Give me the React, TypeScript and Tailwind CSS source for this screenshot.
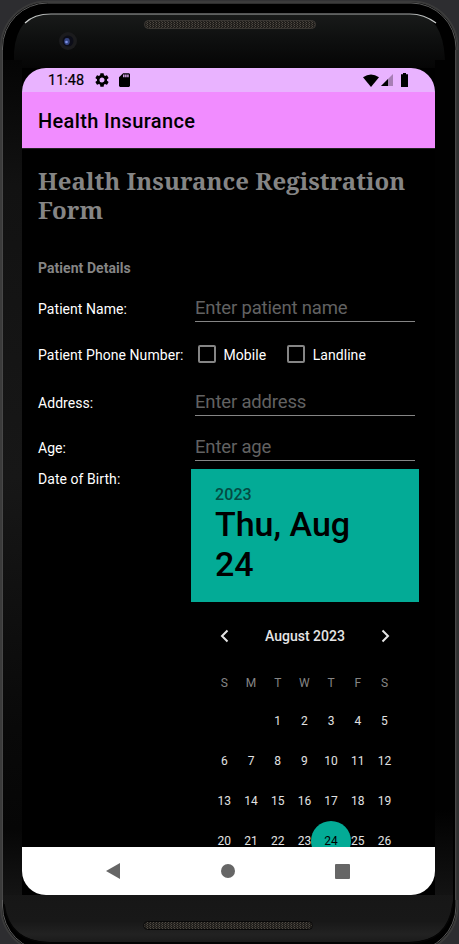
import React from "react";

const WEEKDAYS = ["S", "M", "T", "W", "T", "F", "S"];
const DAYS: (number | null)[] = [null, null, ...Array.from({ length: 26 }, (_, i) => i + 1)];

function DeviceFrame() {
  return (
    <svg className="absolute inset-0" width="459" height="944" viewBox="0 0 459 944" fill="none">
      <defs>
        <linearGradient id="top" x1="0" y1="13" x2="0" y2="68" gradientUnits="userSpaceOnUse">
          <stop stopColor="#191b1a" />
          <stop offset="0.5" stopColor="#0e0f0f" />
          <stop offset="1" stopColor="#050505" />
        </linearGradient>
        <linearGradient id="left" x1="0" y1="60" x2="0" y2="895" gradientUnits="userSpaceOnUse">
          <stop stopColor="#050505" />
          <stop offset="0.15" stopColor="#121212" />
          <stop offset="0.5" stopColor="#171717" />
          <stop offset="0.8" stopColor="#090909" />
          <stop offset="0.92" stopColor="#060606" />
          <stop offset="1" stopColor="#141414" />
        </linearGradient>
        <linearGradient id="right" x1="0" y1="810" x2="0" y2="900" gradientUnits="userSpaceOnUse">
          <stop stopColor="#010101" />
          <stop offset="1" stopColor="#141414" />
        </linearGradient>
        <linearGradient id="bottom" x1="0" y1="890" x2="0" y2="942" gradientUnits="userSpaceOnUse">
          <stop stopColor="#161616" />
          <stop offset="0.6" stopColor="#181818" />
          <stop offset="0.85" stopColor="#222222" />
          <stop offset="1" stopColor="#1b1b1b" />
        </linearGradient>
        <linearGradient id="shine" x1="25" y1="0" x2="436" y2="0" gradientUnits="userSpaceOnUse">
          <stop stopColor="#d0d3d2" />
          <stop offset="0.06" stopColor="#a5a8a7" />
          <stop offset="0.94" stopColor="#a5a8a7" />
          <stop offset="1" stopColor="#d0d3d2" />
        </linearGradient>
        <pattern id="mesh" width="3" height="2" patternUnits="userSpaceOnUse">
          <rect width="3" height="2" fill="#201e1b" />
          <rect width="1" height="1" fill="#504b44" />
          <rect x="2" y="1" width="1" height="1" fill="#3f3b35" />
        </pattern>
        <clipPath id="shell">
          <rect x="3" y="3" width="452.500" height="947" rx="45" />
        </clipPath>
      </defs>
      <rect width="459" height="944" fill="#2d2d30" />
      <rect x="1" y="1.500" width="456.500" height="951" rx="46" fill="#000" stroke="#3b3b3b" strokeWidth="2" />
      <rect x="2.500" y="3" width="453.500" height="948" rx="45" fill="#000" stroke="#5c5c5c" strokeWidth="1" />
      <g clipPath="url(#shell)">
        <path d="M14 60V52Q17 14 49 14H412Q443 14 445 60V68H14Z" fill="url(#top)" />
        <rect x="3" y="60" width="19" height="836" fill="url(#left)" />
        <rect x="435" y="60" width="18" height="750" fill="#010101" />
        <rect x="435" y="810" width="18" height="86" fill="url(#right)" />
        <path d="M3 895H453V900Q450 942 408 942H50Q8 942 3 900Z" fill="url(#bottom)" />
      </g>
      <path d="M25 23Q34 14 51 14H410Q424 14 436 23" stroke="url(#shine)" strokeWidth="1.200" />
      <path d="M2.500 50V900M455.500 50V900" stroke="#484848" />
      <path d="M457.500 50V900" stroke="#303030" strokeWidth="2" />
      <path d="M4 904Q9 943 52 943H408Q448 943 453 904" stroke="#050505" strokeWidth="1.500" />
      <rect x="144.500" y="20.500" width="171" height="8" rx="4" fill="url(#mesh)" stroke="#3a3733" />
      <rect x="143.500" y="921.500" width="169" height="8" rx="4" fill="url(#mesh)" stroke="#080808" />
      <circle cx="68" cy="41" r="9" fill="#1b1b1d" />
      <circle cx="68" cy="41" r="5.500" fill="#0c0d18" />
      <ellipse cx="67" cy="41.500" rx="2.800" ry="3.400" fill="#34437f" />
      <circle cx="66.500" cy="42" r="1.300" fill="#7d91e8" />
      <path d="M22 68H411Q435 68 435 92V847H22Z" fill="#000" />
    </svg>
  );
}

function StatusBar() {
  return (
    <div className="flex h-6 shrink-0 items-center bg-[#e9b3ff] pr-[27px] pl-[26px] text-black">
      <span className="w-[47px] pt-px text-[14.5px] leading-[25px] [-webkit-text-stroke:0.2px_#000]">11:48</span>
      <svg width="14" height="14" viewBox="2 2 20 20">
        <path d="M19.140 12.940c.04-.3.06-.61.06-.94 0-.32-.02-.64-.07-.94l2.030-1.580a.49.490 0 0 0 .12-.61l-1.920-3.320a.488.488 0 0 0-.59-.22l-2.390.960c-.5-.38-1.030-.7-1.620-.94l-.36-2.540a.484.484 0 0 0-.48-.41h-3.840c-.24 0-.43.170-.47.410l-.36 2.540c-.59.240-1.130.570-1.620.940l-2.390-.96c-.22-.08-.47 0-.59.220L2.740 8.870c-.12.210-.08.470.120.610l2.030 1.580c-.05.300-.09.630-.09.940s.02.640.070.940l-2.030 1.580a.49.490 0 0 0-.12.610l1.920 3.320c.12.220.370.290.590.220l2.390-.96c.5.380 1.030.700 1.620.940l.36 2.540c.05.240.240.410.480.410h3.840c.24 0 .44-.17.470-.41l.36-2.540c.59-.24 1.130-.56 1.620-.94l2.390.960c.22.080.470 0 .59-.22l1.920-3.320c.12-.22.070-.47-.12-.61l-2.010-1.580zM12 15.600A3.610 3.610 0 0 1 8.400 12c0-1.980 1.620-3.600 3.600-3.600s3.600 1.620 3.600 3.600-1.620 3.600-3.600 3.600z" />
      </svg>
      <svg className="ml-[10px]" width="11" height="14" viewBox="4 2 16 20">
        <path d="M18 2h-8L4.020 8 4 20c0 1.100.9 2 2 2h12c1.100 0 2-.9 2-2V4c0-1.100-.9-2-2-2zm-6 6h-2V4h2v4zm3 0h-2V4h2v4zm3 0h-2V4h2v4z" />
      </svg>
      <svg className="ml-auto" width="16" height="13" viewBox="0 0 16 13">
        <path d="M0 3.200Q8-2.200 16 3.200L8 13Z" />
      </svg>
      <svg className="ml-[2px]" width="12" height="12" viewBox="0 0 12 12">
        <path d="M12 0V12H0Z" fill="#a77eb5" />
        <path d="M7 5V12H0Z" />
      </svg>
      <svg className="ml-[8px]" width="7" height="14" viewBox="0 0 7 14">
        <path d="M2 0H5V1.300H7V14H0V1.300H2Z" />
      </svg>
    </div>
  );
}

function Field({ label, placeholder, className }: { label: string; placeholder: string; className: string }) {
  return (
    <div className={`flex shrink-0 items-start ${className}`}>
      <label className="mt-2 w-[157px] text-[14px] leading-[19px] tracking-[0.06px]">{label}</label>
      <div className="h-[30px] w-[220px] border-b border-[#858585] text-[18.5px] leading-[33px] tracking-[-0.17px] text-[#626262]">
        {placeholder}
      </div>
    </div>
  );
}

function Checkbox({ label }: { label: string }) {
  return (
    <div className="flex items-center text-[14px] leading-[18px] tracking-[0.06px]">
      <span className="mr-[7.5px] size-[18px] rounded-[2px] border-2 border-[#858585]" />
      <span className="pt-0.5">{label}</span>
    </div>
  );
}

function DatePicker() {
  return (
    <div className="w-[228px] shrink-0">
      <div className="h-[133px] bg-[#03ab96] px-[24px] pt-[16px] font-medium text-black">
        <div className="text-[16px] leading-[19px] tracking-[0.1px] text-[#044b43]">2023</div>
        <div className="text-[34px] leading-[40px]">
          Thu, Aug
          <br />
          24
        </div>
      </div>
      <div className="mt-[22px] flex h-6 items-center justify-between px-[22px] text-[#e5e5e5]">
        <svg width="24" height="24" viewBox="0 0 24 24" fill="none" stroke="currentColor" strokeWidth="2">
          <path d="M14.500 6.500 9 12l5.500 5.500" />
        </svg>
        <span className="text-[14px] leading-6 font-medium">August 2023</span>
        <svg width="24" height="24" viewBox="0 0 24 24" fill="none" stroke="currentColor" strokeWidth="2">
          <path d="m9.500 6.500 5.500 5.500-5.500 5.500" />
        </svg>
      </div>
      <div className="mx-[20px] mt-[14px] grid grid-cols-[repeat(7,26.7px)] text-center text-[12px]">
        {WEEKDAYS.map((d, i) => (
          <span key={i} className="h-[39px] leading-[43px] text-[#858585]">{d}</span>
        ))}
        {DAYS.map((d, i) => (
          <div key={i} className="flex h-10 justify-center leading-10 text-[#e2e2e2]">
            {d === 24 ? (
              <span className="size-10 shrink-0 rounded-full bg-[#03ab96] text-black">24</span>
            ) : (
              <span className="relative">{d}</span>
            )}
          </div>
        ))}
      </div>
    </div>
  );
}

export default function App() {
  return (
    <div className="relative h-[944px] w-[459px] overflow-hidden pt-[68px] pl-[22px] font-['Roboto',sans-serif]">
      <DeviceFrame />
      <main className="relative flex h-[827px] w-[413px] flex-col overflow-hidden rounded-[24px] bg-black text-white">
        <StatusBar />
        <header className="h-14 shrink-0 bg-[#f18cff] pl-4 text-[20px] leading-[59px] font-medium text-black">
          <span className="tracking-[0.36px]">Health Insurance</span>
        </header>
        <section className="flex min-h-0 flex-1 flex-col overflow-hidden border-t border-[#222] pt-[17px] pl-4">
          <h1 className="shrink-0 font-['Noto_Serif','DejaVu_Serif_Condensed','DejaVu_Serif',serif] text-[24px] leading-[29px] font-bold tracking-[0.05px] whitespace-nowrap text-[#858585]">
            Health Insurance Registration
            <br />
            Form
          </h1>
          <h2 className="mt-[35px] shrink-0 text-[14px] leading-[18px] font-bold tracking-[0.05px] text-[#858585]">Patient Details</h2>
          <Field label="Patient Name:" placeholder="Enter patient name" className="mt-[15px]" />
          <div className="mt-[23px] flex h-[18px] shrink-0 items-center">
            <span className="w-[160px] pt-0.5 text-[14px] leading-[18px] tracking-[0.06px]">Patient Phone Number:</span>
            <div className="flex gap-[21px]">
              <Checkbox label="Mobile" />
              <Checkbox label="Landline" />
            </div>
          </div>
          <Field label="Address:" placeholder="Enter address" className="mt-[23px]" />
          <Field label="Age:" placeholder="Enter age" className="mt-[15px]" />
          <div className="mt-[8px] flex shrink-0 items-start">
            <span className="mt-px w-[153px] text-[14px] leading-[19px] tracking-[0.06px]">Date of Birth:</span>
            <DatePicker />
          </div>
        </section>
        <nav className="flex h-12 shrink-0 items-center justify-between bg-white pr-[85px] pl-[84px]">
          <svg width="14" height="16" viewBox="0 0 14 16" fill="#666"><path d="M14 0V16L0 8Z" /></svg>
          <span className="size-[14px] rounded-full bg-[#666]" />
          <span className="size-[15px] rounded-[1px] bg-[#666]" />
        </nav>
      </main>
    </div>
  );
}
